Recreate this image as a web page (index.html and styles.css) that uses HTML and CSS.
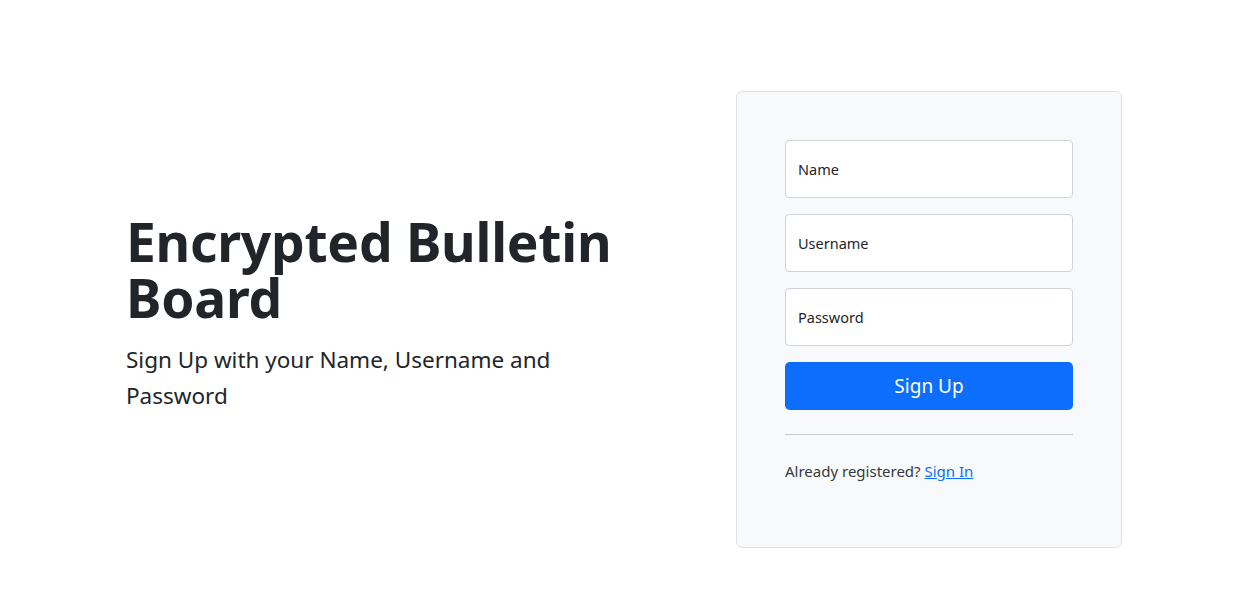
FILE: index.html
```html
<!DOCTYPE html>
<html lang="en">
<head>
<meta charset="utf-8">
<title>Encrypted Bulletin Board - Sign Up</title>
<link rel="stylesheet" href="styles.css">
</head>
<body>
<main class="page">
  <section class="intro">
    <h1 class="title">Encrypted Bulletin Board</h1>
    <p class="lead">Sign Up with your Name, Username and Password</p>
  </section>
  <form class="card">
    <input class="field" type="text" placeholder="Name">
    <input class="field" type="text" placeholder="Username">
    <input class="field" type="password" placeholder="Password">
    <button class="btn" type="button">Sign Up</button>
    <hr class="divider">
    <p class="note"><small>Already registered? <a href="#" class="link">Sign In</a></small></p>
  </form>
</main>
</body>
</html>
```

FILE: styles.css
```css
* { box-sizing: border-box; }
html, body { margin: 0; padding: 0; background: #fff; }
body {
  font-family: "Noto Sans", "Open Sans", sans-serif;
  color: #212529;
  font-size: 16px;
  line-height: 1.5;
}
.page {
  display: flex;
  align-items: center;
  padding: 91px 0 0 126px;
}
.intro {
  width: 610px;
  flex: 0 0 610px;
  padding-top: 4px;
}
.title {
  font-size: 53.3px;
  font-weight: 700;
  line-height: 56px;
  margin: 0 0 16px;
  letter-spacing: -0.25px;
}
.lead {
  width: 460px;
  font-size: 22.5px;
  line-height: 36px;
  margin: 0 0 16px;
}
.card {
  width: 386px;
  flex: 0 0 386px;
  padding: 48px;
  background: #f8f9fa;
  border: 1px solid #dee2e6;
  border-radius: 6px;
  display: flex;
  flex-direction: column;
}
.field {
  height: 58px;
  width: 100%;
  margin: 0 0 16px;
  padding: 0 12px;
  border: 1px solid #ced4da;
  border-radius: 4px;
  background: #fff;
  font-family: inherit;
  font-size: 14.5px;
  color: #212529;
}
.field::placeholder { color: #212529; opacity: 1; }
.btn {
  height: 48px;
  width: 100%;
  border: 0;
  border-radius: 4.8px;
  background: #0d6efd;
  color: #fff;
  font-family: inherit;
  font-size: 19px;
  cursor: pointer;
}
.divider {
  margin: 24px 0;
  border: 0;
  border-top: 1px solid #c9cacc;
  height: 0;
}
.note {
  margin: 0 0 16px;
  line-height: 24px;
}
.note small { font-size: 15px; color: #343a40; }
.link { color: #0d6efd; text-decoration: underline; }
```
